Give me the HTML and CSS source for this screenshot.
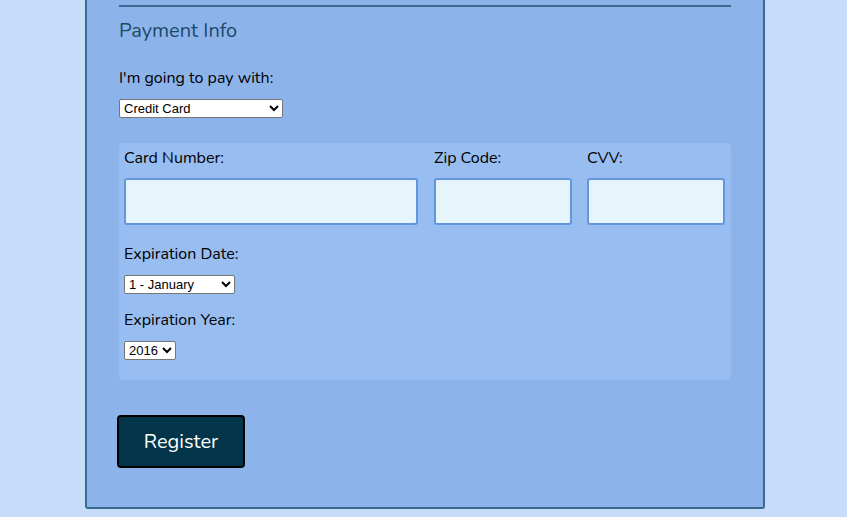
FILE: index.html
```html
<!DOCTYPE html>
<html>
<head>
<meta charset="utf-8">
<link rel="stylesheet" href="styles.css">
</head>
<body>
<div class="container">
  <hr class="rule">
  <h2 class="section-title">Payment Info</h2>
  <label class="label pay-label" for="payment">I'm going to pay with:</label>
  <select id="payment" class="select select-pay">
    <option>Credit Card</option>
    <option>PayPal</option>
    <option>Bitcoin</option>
  </select>
  <div class="card-box">
    <div class="card-row">
      <div class="field">
        <label class="label" for="cc-num">Card Number:</label>
        <input id="cc-num" class="text-input" type="text">
      </div>
      <div class="field">
        <label class="label" for="zip">Zip Code:</label>
        <input id="zip" class="text-input" type="text">
      </div>
      <div class="field">
        <label class="label" for="cvv">CVV:</label>
        <input id="cvv" class="text-input" type="text">
      </div>
    </div>
    <label class="label exp-label" for="exp-month">Expiration Date:</label>
    <select id="exp-month" class="select select-month">
      <option>1 - January</option>
      <option>2 - February</option>
    </select>
    <label class="label exp-label" for="exp-year">Expiration Year:</label>
    <select id="exp-year" class="select select-year">
      <option>2016</option>
      <option>2017</option>
    </select>
  </div>
  <button class="register" type="submit">Register</button>
</div>
</body>
</html>
```
FILE: styles.css
```css
html, body {
  margin: 0;
  padding: 0;
  background: #c6dcf9;
}
body {
  font-family: "Nunito", "Lato", "Noto Sans", sans-serif;
  color: #000;
}
.container {
  box-sizing: border-box;
  width: 680px;
  margin-left: 85px;
  padding: 5px 32px 39px;
  background: #8cb4eb;
  border: 2px solid #3b6a91;
  border-top: none;
  border-radius: 0 0 3px 3px;
  display: flex;
  flex-direction: column;
  align-items: flex-start;
}
.rule {
  width: 100%;
  height: 2px;
  border: 0;
  margin: 0;
  background: #3b6a91;
}
.section-title {
  margin: 11px 0 0;
  font-size: 20px;
  line-height: 26px;
  font-weight: 400;
  color: #1c4a69;
}
.label {
  display: block;
  font-size: 16px;
  line-height: 20px;
}
.pay-label {
  margin-top: 24px;
}
.select {
  font-family: "Liberation Sans", Arial, sans-serif;
  font-size: 13px;
  height: 19px;
  margin-top: 11px;
  box-sizing: border-box;
  background: #fff;
  border: 1px solid #767676;
  border-radius: 2px;
  padding: 0;
}
.select-pay { width: 164px; }
.select-month { width: 111px; margin-top: 11px; }
.select-year { width: 52px; }
.card-box {
  box-sizing: border-box;
  width: 100%;
  margin-top: 25px;
  padding: 5px 5px 20px;
  background: #98bdf1;
  border-radius: 4px;
  display: flex;
  flex-direction: column;
  align-items: flex-start;
}
.card-row {
  display: grid;
  grid-template-columns: 294px 138px 138px;
  column-gap: 16px;
}
.card-row .field:last-child {
  margin-left: -1px;
  margin-right: 1px;
}
.text-input {
  display: block;
  box-sizing: border-box;
  width: 100%;
  height: 47px;
  margin-top: 10px;
  background: #e6f4fb;
  border: 2px solid #6396dc;
  border-radius: 3px;
  padding: 0 8px;
  font-size: 16px;
}
.exp-label {
  margin-top: 19px;
}
.exp-label + .select-year {
  margin-top: 11px;
}
.select-month + .exp-label {
  margin-top: 16px;
}
.register {
  margin-top: 35px;
  margin-left: -2px;
  width: 128px;
  height: 53px;
  background: #023549;
  color: #fff;
  border: 2px solid #000;
  border-radius: 4px;
  font-family: "Nunito", "Lato", "Noto Sans", sans-serif;
  font-size: 20px;
  cursor: pointer;
}
```
